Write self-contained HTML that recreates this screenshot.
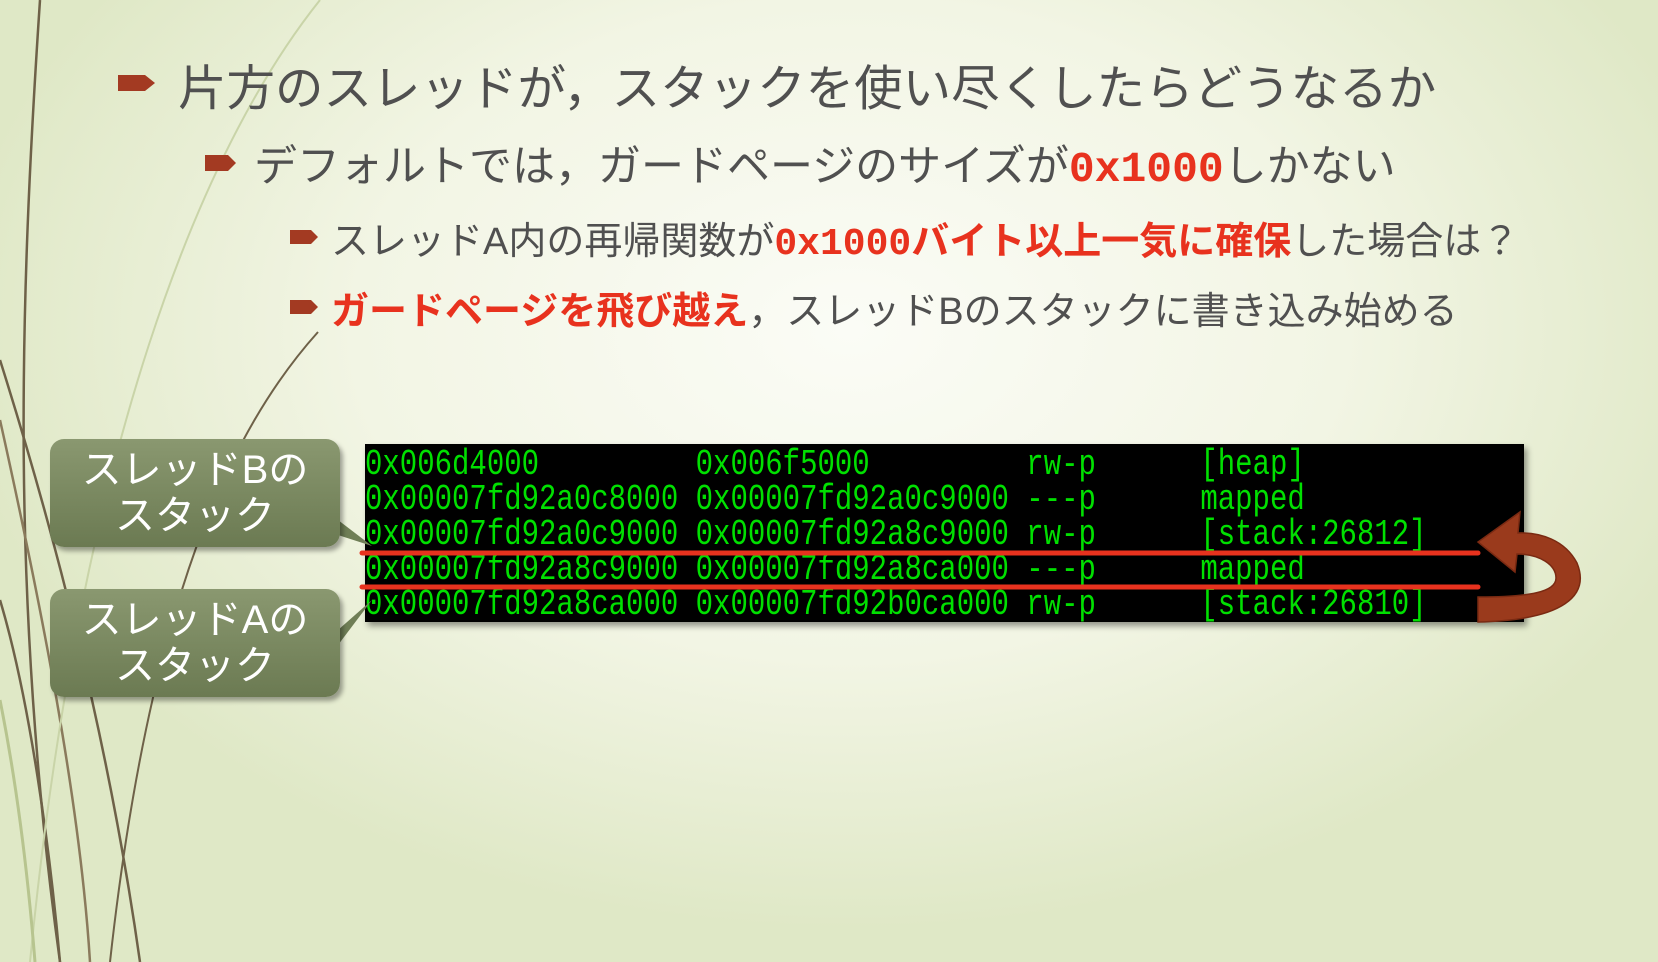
<!DOCTYPE html>
<html><head><meta charset="utf-8"><style>
body{margin:0;width:1658px;height:962px;overflow:hidden;position:relative;font-family:"Liberation Sans","Noto Sans CJK JP",sans-serif;
background:radial-gradient(ellipse 900px 600px at 850px 330px,#fbfcf6 0%,#f2f5e4 55%,#dfe8c6 100%);}
.l{position:absolute;white-space:nowrap;color:#505050;}
.r{color:#e8321e;font-weight:bold;}
.m{font-family:"Liberation Mono",monospace;}
.term{position:absolute;left:365px;top:444px;width:1159px;height:178px;background:#000;box-shadow:3px 4px 6px rgba(0,0,0,.4);overflow:hidden;}
.row{position:absolute;left:0;height:35px;color:#00e000;font-family:"Liberation Mono",monospace;font-size:29px;letter-spacing:0;white-space:pre;line-height:35px;transform:scaleY(1.25);transform-origin:0 50%;}
.call{position:absolute;left:50px;width:290px;height:108px;border-radius:14px;background:linear-gradient(#8a9870,#6b7a52);box-shadow:3px 4px 5px rgba(0,0,0,.35);color:#fff;font-size:40px;text-align:center;line-height:46px;padding-top:8px;box-sizing:border-box;}
</style></head><body>
<svg style="position:absolute;left:0;top:0" width="1658" height="962">
<g fill="none" stroke-width="2.5">
<path d="M40 0 C20 300 10 600 60 962" stroke="#6e6148"/>
<path d="M0 360 C60 550 110 750 140 962" stroke="#6e6148"/>
<path d="M0 420 C40 600 80 800 90 962" stroke="#8a7a5c"/>
<path d="M0 600 C30 700 50 850 60 962" stroke="#6e6148"/>
<path d="M320 0 C200 150 80 450 30 962" stroke="#c9d4a8" stroke-width="2"/>
<path d="M318 332 C230 430 150 600 110 962" stroke="#6e6148" stroke-width="2"/>
<path d="M0 700 C20 800 30 900 35 962" stroke="#b7c48f" stroke-width="3"/>
</g>
<g fill="#a33a22">
<polygon points="118,75 145,75 155,83 145,91 118,91"/>
<polygon points="205,155 228,155 236,163 228,171 205,171"/>
<polygon points="290,230 311,230 318,237 311,244 290,244"/>
<polygon points="290,300 311,300 318,307 311,314 290,314"/>
</g>
</svg>
<div class="l" style="left:178px;top:49px;font-size:48.5px;">片方のスレッドが，スタックを使い尽くしたらどうなるか</div>
<div class="l" style="left:254px;top:132px;font-size:43px;">デフォルトでは，ガードページのサイズが<span class="r m">0x1000</span>しかない</div>
<div class="l" style="left:331px;top:210px;font-size:38px;">スレッドA内の再帰関数が<span class="r"><span class="m">0x1000</span>バイト以上一気に確保</span>した場合は？</div>
<div class="l" style="left:331px;top:280px;font-size:38px;"><span class="r">ガードページを飛び越え</span>，スレッドBのスタックに書き込み始める</div>
<div class="term">
<div class="row" style="top:3px">0x006d4000         0x006f5000         rw-p      [heap]</div>
<div class="row" style="top:38px">0x00007fd92a0c8000 0x00007fd92a0c9000 ---p      mapped</div>
<div class="row" style="top:73px">0x00007fd92a0c9000 0x00007fd92a8c9000 rw-p      [stack:26812]</div>
<div class="row" style="top:108px">0x00007fd92a8c9000 0x00007fd92a8ca000 ---p      mapped</div>
<div class="row" style="top:143px">0x00007fd92a8ca000 0x00007fd92b0ca000 rw-p      [stack:26810]</div>
</div>
<svg style="position:absolute;left:0;top:0" width="1658" height="962">
<line x1="362" y1="553" x2="1478" y2="553" stroke="#e8321e" stroke-width="5" stroke-linecap="round"/>
<line x1="362" y1="587" x2="1478" y2="587" stroke="#e8321e" stroke-width="5" stroke-linecap="round"/>
<path d="M1478 622 C1565 620 1590 595 1577 563 C1565 540 1540 532 1518 533 L1520 512 L1478 542 L1515 572 L1517 554 C1540 554 1556 565 1556 578 C1556 592 1530 597 1478 597 Z" fill="#9a3a1c" stroke="#7a2a12" stroke-width="1.5"/>
<polygon points="338,520 372,546 338,535" fill="#6f7e56"/>
<polygon points="338,630 372,600 338,645" fill="#6f7e56"/>
</svg>
<div class="call" style="top:439px;">スレッドBの<br>スタック</div>
<div class="call" style="top:589px;">スレッドAの<br>スタック</div>
</body></html>
